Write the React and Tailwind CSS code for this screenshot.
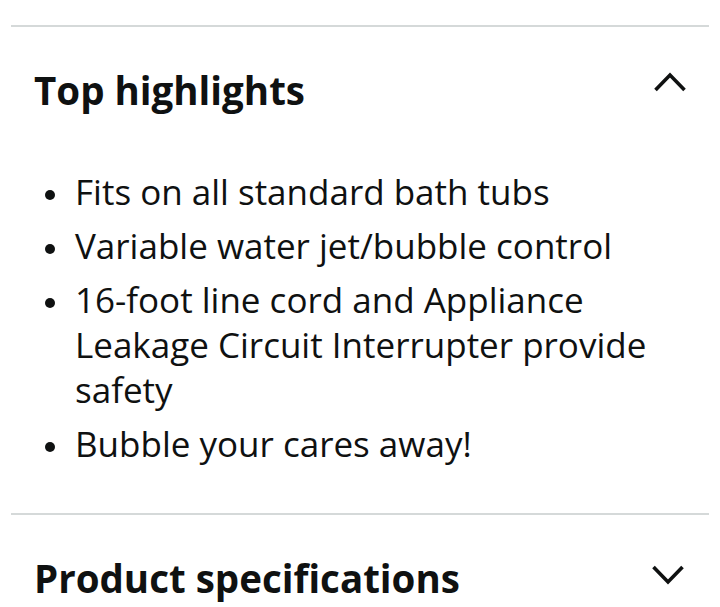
import React from "react";

const items = [
  "Fits on all standard bath tubs",
  "Variable water jet/bubble control",
  "16-foot line cord and Appliance Leakage Circuit Interrupter provide safety",
  "Bubble your cares away!",
];

function Chevron({ up }) {
  return (
    <svg width="34" height="22" viewBox="0 0 34 22" fill="none" className="shrink-0">
      <path
        d={up ? "M2.5 19 L17 4 L31.5 19" : "M2.5 3 L17 18 L31.5 3"}
        stroke="#0f1111"
        strokeWidth="3.6"
        strokeLinecap="butt"
        strokeLinejoin="miter"
      />
    </svg>
  );
}

export default function App() {
  return (
    <div className="w-[720px] h-[607px] overflow-hidden bg-white text-[#0f1111] font-['Open_Sans',sans-serif]">
      <div className="pt-[25px]">
        <div className="mx-[11px] h-[2px] bg-[#d5d9d9]" />
      </div>

      <div className="mt-[39px] flex items-start justify-between pl-[34px] pr-[33px]">
        <h2 className="text-[38.5px] leading-[48px] font-bold">Top highlights</h2>
        <div className="mt-[5px]">
          <Chevron up />
        </div>
      </div>

      <ul className="mt-[55px] flex flex-col gap-[9px] pl-[45px] pr-[35px]">
        {items.map((t) => (
          <li key={t} className="flex items-start gap-[20px]">
            <span className="mt-[21px] h-[10px] w-[10px] shrink-0 rounded-full bg-[#0f1111]" />
            <span className="text-[35px] leading-[45px]">{t}</span>
          </li>
        ))}
      </ul>

      <div className="mt-[47px] mx-[11px] h-[2px] bg-[#d5d9d9]" />

      <div className="mt-[39px] flex items-start justify-between pl-[34px] pr-[35px]">
        <h2 className="text-[38.5px] leading-[48px] font-bold">Product specifications</h2>
        <div className="mt-[10px]">
          <Chevron />
        </div>
      </div>
    </div>
  );
}
